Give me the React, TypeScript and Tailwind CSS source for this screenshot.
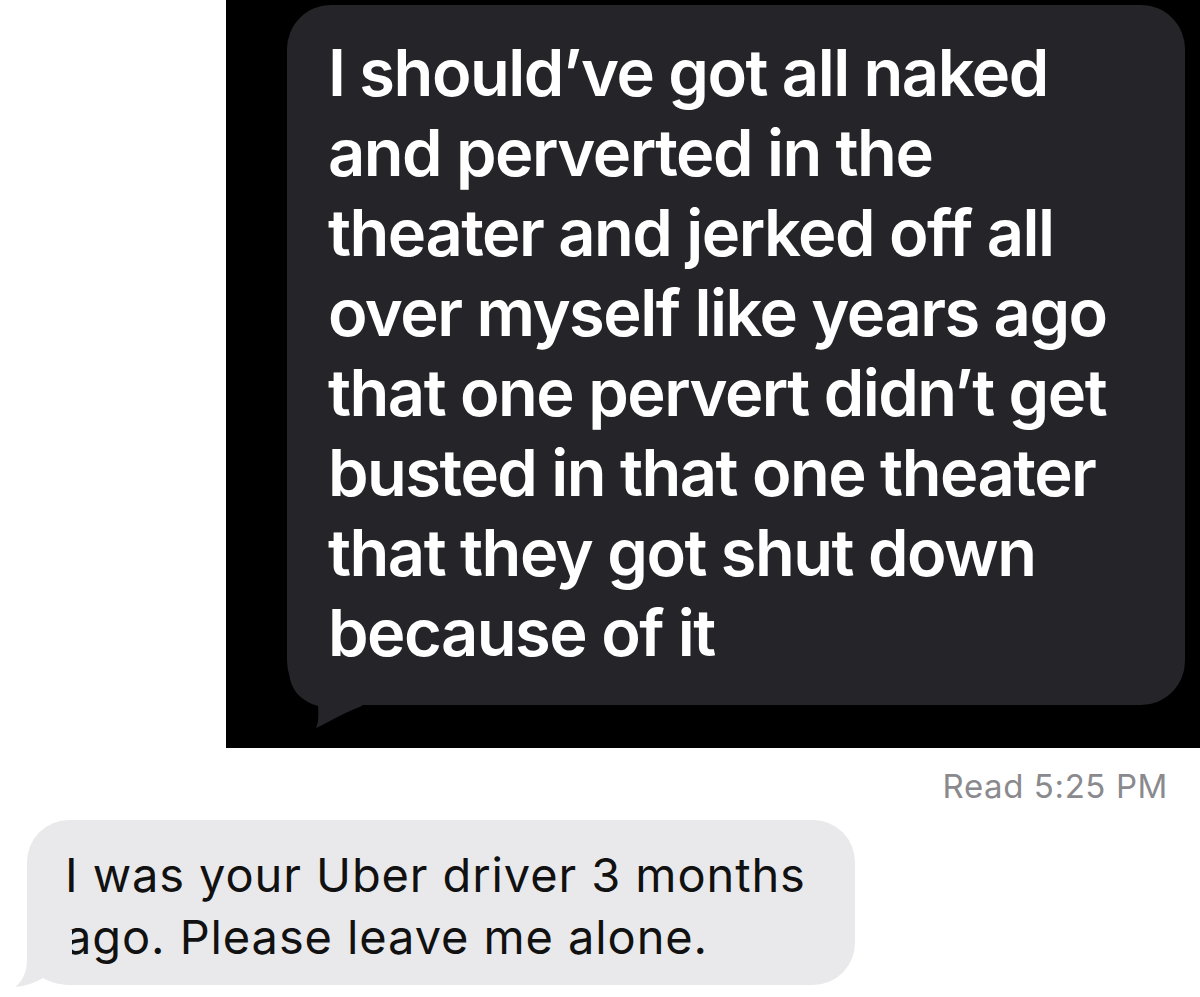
import type { FC } from "react";

const darkLines = [
  "I should’ve got all naked",
  "and perverted in the",
  "theater and jerked off all",
  "over myself like years ago",
  "that one pervert didn’t get",
  "busted in that one theater",
  "that they got shut down",
  "because of it",
];

const font = { fontFamily: "Inter, 'Noto Sans', sans-serif" };

const DarkBubble: FC = () => (
  <div className="relative h-[700px] w-[898px] rounded-[44px] bg-[#252429] pl-[41px] pt-[28px]">
    {darkLines.map((line) => (
      <div
        key={line}
        className="whitespace-nowrap text-[65px] font-semibold leading-[80px] tracking-[-1.5px] text-white"
      >
        {line}
      </div>
    ))}
    <svg
      className="absolute left-0 bottom-[-28px]"
      width="80"
      height="60"
      viewBox="0 0 80 60"
    >
      <path
        d="M2 0 C4 18 14 28 31 33 C32 44 31 51 29 55 C40 50 56 40 75 33 L75 0 Z"
        fill="#252429"
      />
    </svg>
  </div>
);

const GrayBubble: FC = () => (
  <div className="relative ml-[27px] h-[165px] w-[828px] rounded-[42px] bg-[#e9e9eb] pl-[38px] pt-[24px]">
    <div className="whitespace-nowrap text-[47px] leading-[62px] tracking-[0.9px] text-[#111111]">
      I was your Uber driver 3 months
    </div>
    <div className="whitespace-nowrap text-[47px] leading-[62px] tracking-[0.9px] text-[#111111]">
      ago. Please leave me alone.
    </div>
    <svg
      className="absolute left-[-15px] bottom-[-5px]"
      width="60"
      height="60"
      viewBox="0 0 60 60"
    >
      <path
        d="M15 0 L15 30 C15 42 10 52 3 57 C15 56 24 52 31 48 C40 53 50 55 60 55 L60 0 Z"
        fill="#e9e9eb"
      />
    </svg>
  </div>
);

export default function App() {
  return (
    <div className="h-[997px] w-[1200px] overflow-hidden bg-white" style={font}>
      <div className="ml-[226px] h-[748px] w-[974px] bg-black pl-[61px] pt-[5px]">
        <DarkBubble />
      </div>
      <div className="flex justify-end pr-[32px] pt-[18px]">
        <span className="text-[33px] leading-[40px] tracking-[0.6px] text-[#8a8a8e]">
          Read 5:25 PM
        </span>
      </div>
      <div className="pt-[14px]">
        <GrayBubble />
      </div>
    </div>
  );
}
